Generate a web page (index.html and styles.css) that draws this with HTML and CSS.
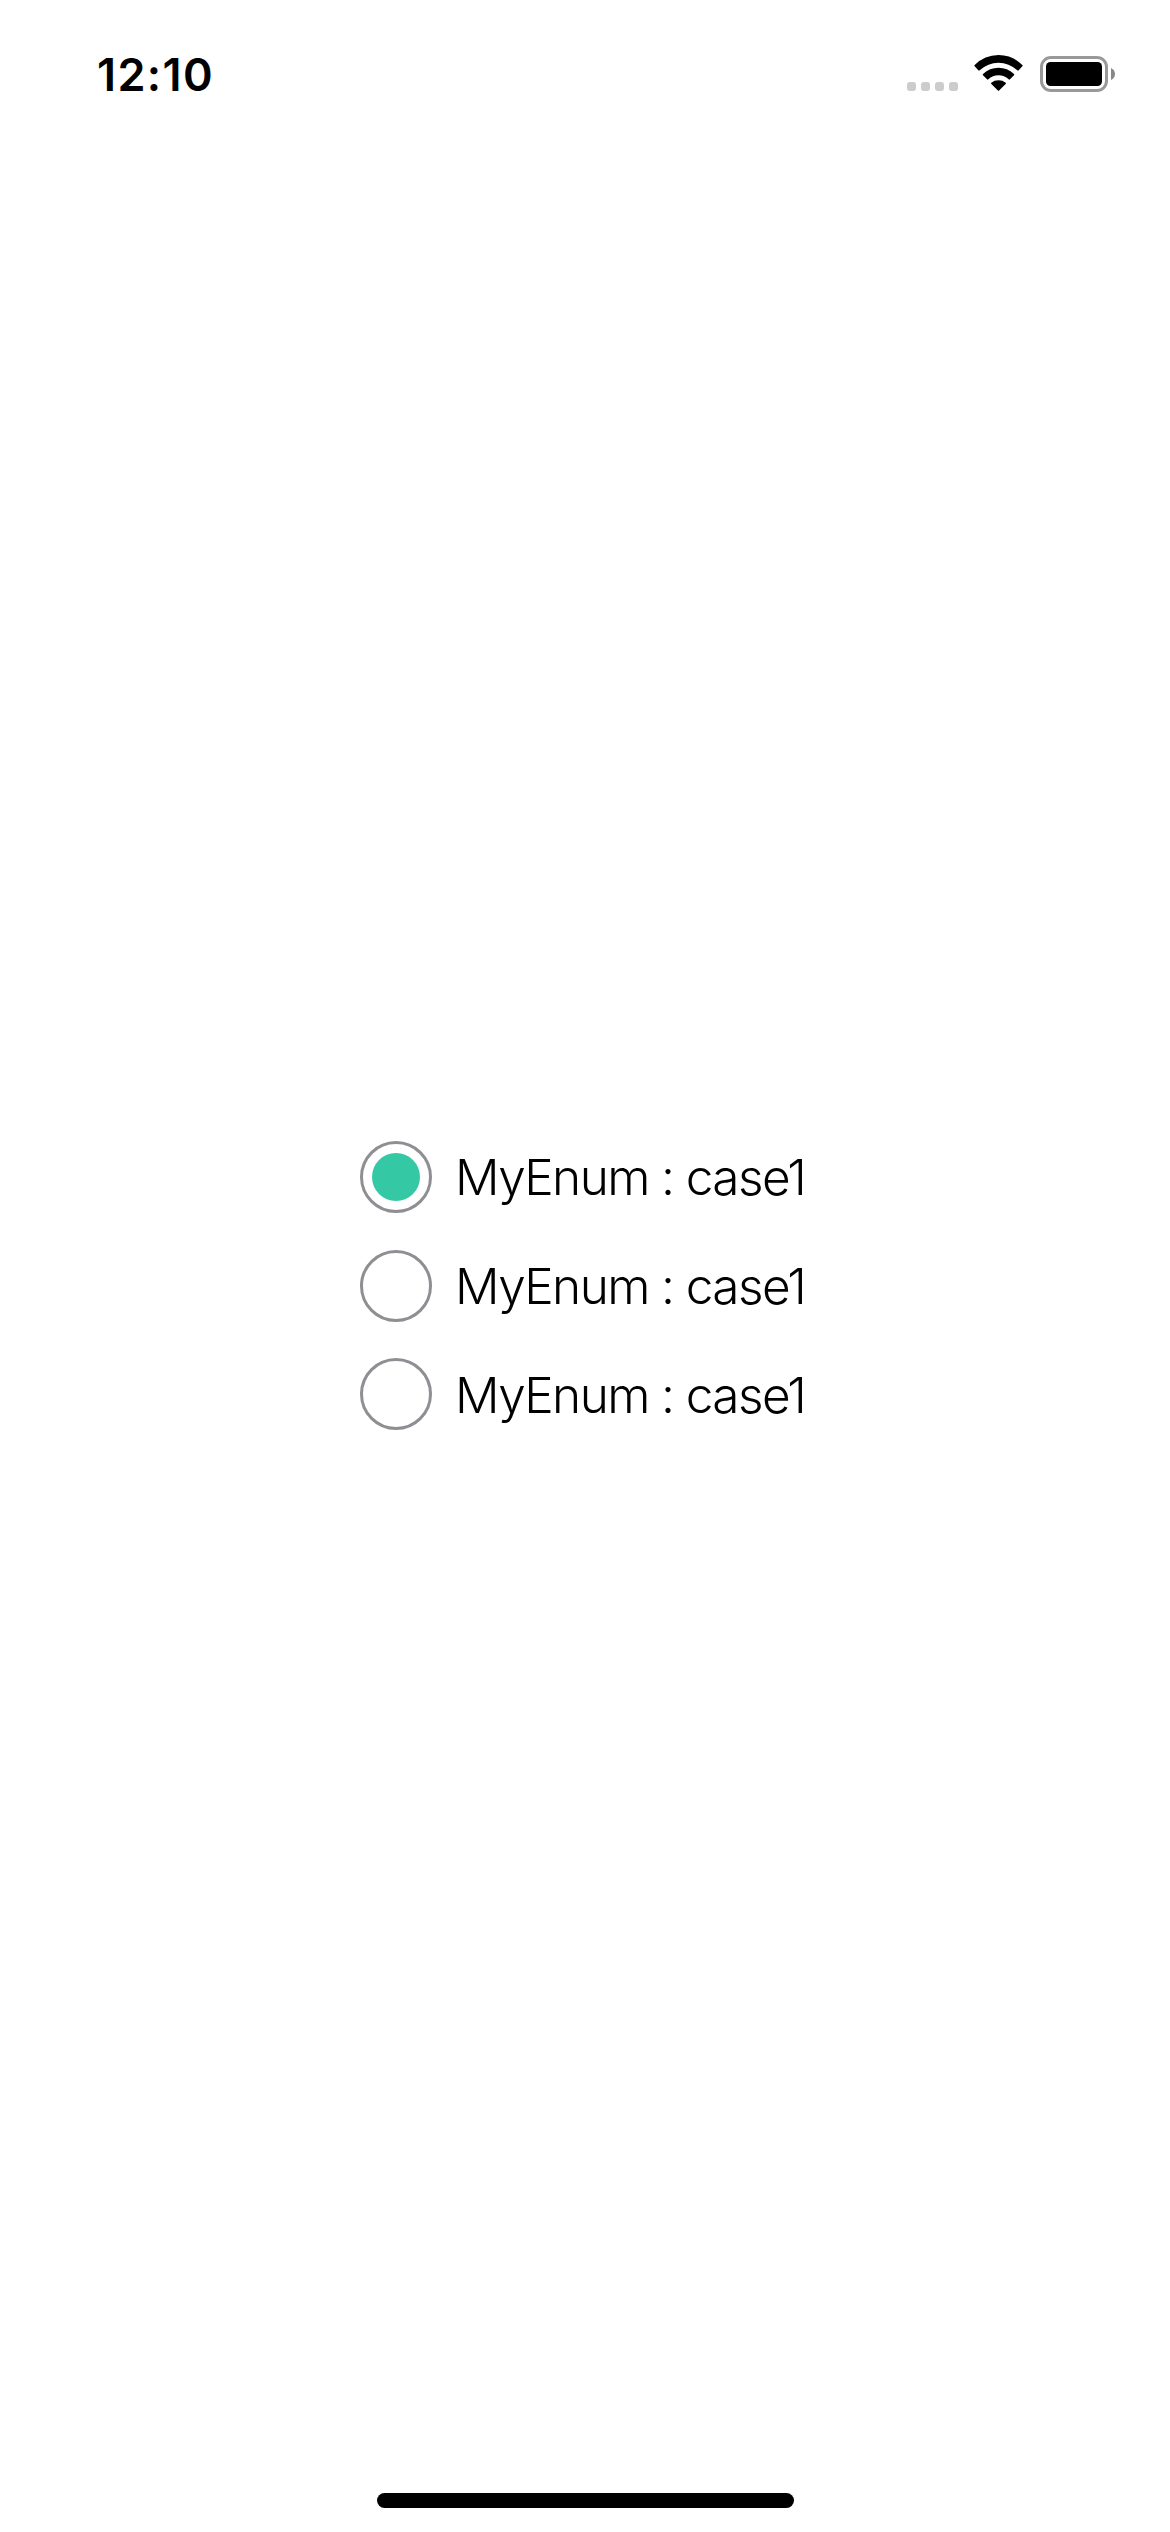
FILE: index.html
```html
<!DOCTYPE html>
<html lang="en">
<head>
<meta charset="utf-8">
<title>Radio buttons</title>
<link rel="stylesheet" href="styles.css">
</head>
<body>
<div class="screen">
  <header class="status">
    <div class="time">12:10</div>
    <div class="indicators">
      <div class="signal"><i></i><i></i><i></i><i></i></div>
      <svg class="wifi" viewBox="254 45 147 108">
        <path d="M256 79Q254 77 256 75Q286 45 327.500 45Q369 45 399 75Q401 77 399 79L388 91Q386 93 384 91Q359 68 327.500 68Q296 68 271 91Q269 93 267 91Z"/>
        <path d="M281 106Q279 104 281 102Q301 83 327.500 83Q354 83 374 102Q376 104 374 106L362 118Q360 120 358 118Q345 106 327.500 106Q310 106 297 118Q295 120 293 118Z"/>
        <path d="M306 132Q304 130 306 128Q315 121 327.500 121Q340 121 349 128Q351 130 349 132L330 151Q327.500 154 325 151Z"/>
      </svg>
      <svg class="battery" viewBox="0 0 75 36">
        <rect x="1.500" y="1.500" width="65" height="33" rx="9.500" fill="none" stroke="#999" stroke-width="3"/>
        <rect x="6" y="6" width="56" height="24" rx="4.500"/>
        <path d="M71 12Q75 14 75 18Q75 22 71 24Z" fill="#888"/>
      </svg>
    </div>
  </header>
  <main class="options">
    <div class="option"><span class="radio selected"></span><span class="label">MyEnum : case1</span></div>
    <div class="option"><span class="radio"></span><span class="label">MyEnum : case1</span></div>
    <div class="option last"><span class="radio"></span><span class="label">MyEnum : case1</span></div>
  </main>
  <footer class="home"></footer>
</div>
</body>
</html>
```
FILE: styles.css
```css
* { box-sizing: border-box; }
body { margin: 0; background: #fff; color: #000; font-family: Inter, "Liberation Sans", sans-serif; }
.screen { width: 1170px; height: 2532px; display: flex; flex-direction: column; align-items: center; overflow: hidden; }
.status { width: 100%; height: 141px; padding: 46px 55px 0 97px; display: flex; justify-content: space-between; align-items: flex-start; }
.time { font-size: 45px; line-height: 57px; font-weight: 600; letter-spacing: 1.4px; white-space: nowrap; }
.indicators { display: flex; padding-top: 9px; }
.signal { display: flex; gap: 5px; padding-top: 27px; margin-right: 16px; }
.signal i { width: 9px; height: 9px; border-radius: 3px; background: #ccc; }
.wifi { width: 49px; height: 36px; margin-right: 17px; }
.battery { width: 75px; height: 36px; margin-top: 1px; }
.options { flex: 1; width: 450px; padding-top: 1000px; }
.option { display: flex; align-items: center; height: 72px; margin-bottom: 37px; }
.option:nth-child(2) { margin-bottom: 36px; }
.radio { flex: none; width: 72px; height: 72px; border: 3px solid #8e8e93; border-radius: 50%; display: flex; align-items: center; justify-content: center; }
.selected::before { content: ""; width: 48px; height: 48px; border-radius: 50%; background: #34c8a5; }
.label { margin-left: 23px; font-size: 49.5px; line-height: 72px; font-weight: 330; letter-spacing: -1.6px; white-space: nowrap; }
.last .label { padding-top: 2px; }
.home { width: 417px; height: 15px; margin: 0 0 24px 1px; border-radius: 8px; background: #000; }
```
